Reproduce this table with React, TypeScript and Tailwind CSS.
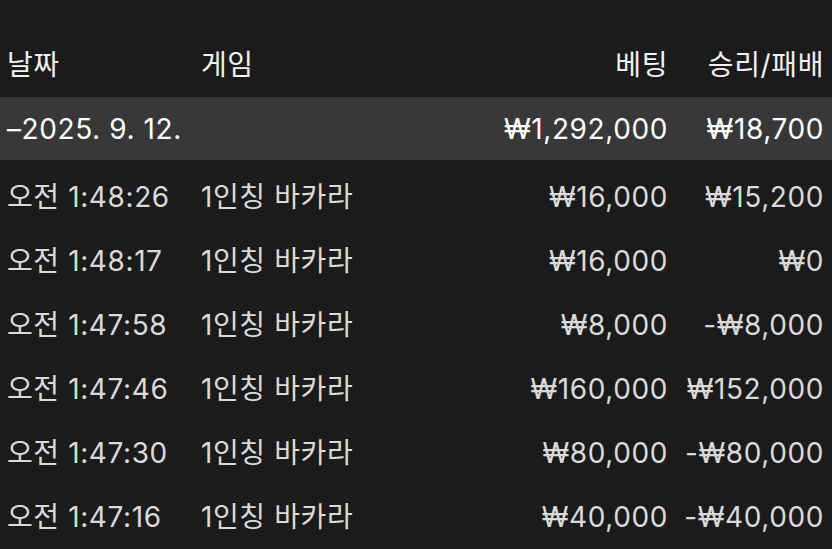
const rows = [
  { time: '오전 1:48:26', game: '1인칭 바카라', bet: '₩16,000', result: '₩15,200' },
  { time: '오전 1:48:17', game: '1인칭 바카라', bet: '₩16,000', result: '₩0' },
  { time: '오전 1:47:58', game: '1인칭 바카라', bet: '₩8,000', result: '-₩8,000' },
  { time: '오전 1:47:46', game: '1인칭 바카라', bet: '₩160,000', result: '₩152,000' },
  { time: '오전 1:47:30', game: '1인칭 바카라', bet: '₩80,000', result: '-₩80,000' },
  { time: '오전 1:47:16', game: '1인칭 바카라', bet: '₩40,000', result: '-₩40,000' },
];

export default function App() {
  return (
    <div
      className="w-[832px] h-[549px] overflow-hidden bg-[#1b1b1b] pt-[33px] text-[28px] tracking-[0.6px]"
      style={{ fontFamily: 'Inter, "Noto Sans CJK KR", sans-serif' }}
    >
      {/* header */}
      <div className="flex items-center h-[64px] text-[#f2f2f2]">
        <div className="w-[201px] pl-[7px]">날짜</div>
        <div className="flex-1">게임</div>
        <div className="w-[180px] text-right">베팅</div>
        <div className="w-[164px] pr-[8px] text-right">승리/패배</div>
      </div>

      {/* day group */}
      <div className="flex items-center h-[63px] bg-[#383838] text-white">
        <div className="flex-1 pl-[7px]">–2025. 9. 12.</div>
        <div className="w-[180px] text-right">₩1,292,000</div>
        <div className="w-[164px] pr-[8px] text-right">₩18,700</div>
      </div>

      <div className="pt-[5px]">
        {rows.map((r) => (
          <div key={r.time} className="flex items-center h-[64px] text-[#dadada]">
            <div className="w-[201px] pl-[7px] whitespace-nowrap">{r.time}</div>
            <div className="flex-1 whitespace-nowrap">{r.game}</div>
            <div className="w-[180px] text-right">{r.bet}</div>
            <div className="w-[164px] pr-[8px] text-right">{r.result}</div>
          </div>
        ))}
      </div>
    </div>
  );
}
